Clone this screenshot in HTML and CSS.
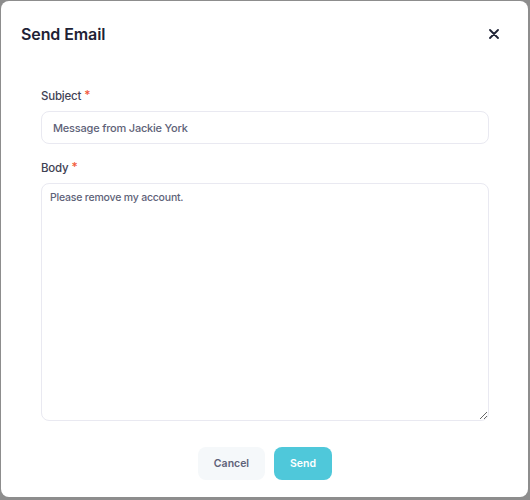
FILE: index.html
```html
<!DOCTYPE html>
<html lang="en">
<head>
    <meta charset="UTF-8">
    <meta name="viewport" content="width=device-width, initial-scale=1.0">
    <title>Send Email</title>
    <link rel="stylesheet" href="styles.css">
</head>
<body>
    <div class="modal">
        <div class="modal-header">
            <h2>Send Email</h2>
            <button class="close-btn" aria-label="Close">
                <svg width="10" height="10" viewBox="0 0 10 10">
                    <path d="M1 1 L9 9 M9 1 L1 9" stroke="#1e2235" stroke-width="1.8" stroke-linecap="round"/>
                </svg>
            </button>
        </div>

        <form class="modal-body">
            <label for="subject">Subject <span class="req">*</span></label>
            <input type="text" id="subject" value="Message from Jackie York">

            <label for="body" class="second">Body <span class="req">*</span></label>
            <textarea id="body">Please remove my account.</textarea>

            <div class="actions">
                <button type="button" class="btn cancel">Cancel</button>
                <button type="button" class="btn send">Send</button>
            </div>
        </form>
    </div>
</body>
</html>
```

FILE: styles.css
```css
* {
    box-sizing: border-box;
}
body {
    margin: 0;
    height: 500px;
    padding: 1px 2px 3px 1px;
    background-color: #8d8d8d;
    font-family: Inter, "Noto Sans", sans-serif;
}
.modal {
    height: 496px;
    background-color: #fff;
    border-radius: 8px;
}
.modal-header {
    display: flex;
    justify-content: space-between;
    align-items: center;
    padding: 21px 28px 0 20px;
}
.modal-header h2 {
    margin: 0;
    font-size: 16px;
    line-height: 24px;
    font-weight: 600;
    color: #1e2235;
    letter-spacing: -0.1px;
}
.close-btn {
    border: none;
    background: none;
    padding: 0;
    width: 12px;
    height: 12px;
    display: flex;
    align-items: center;
    justify-content: center;
    cursor: pointer;
}
.modal-body {
    display: flex;
    flex-direction: column;
    padding: 40px 39px 0 40px;
}
label {
    height: 20px;
    font-size: 11.5px;
    line-height: 20px;
    font-weight: 500;
    color: #3f4254;
    letter-spacing: -0.2px;
    margin-bottom: 5px;
}
label.second {
    margin-top: 14px;
}
.req {
    color: #f25a3a;
    font-size: 12px;
    line-height: 0;
    vertical-align: 1px;
}
input, textarea {
    font-family: inherit;
    border: 1px solid #e9e9f1;
    border-radius: 8px;
    color: #5e6278;
    outline: none;
}
input {
    height: 33px;
    padding: 0 11px;
    font-size: 11px;
    font-weight: 500;
    letter-spacing: -0.2px;
}
textarea {
    height: 238px;
    padding: 7px 8px;
    font-size: 10.5px;
    font-weight: 500;
    letter-spacing: -0.2px;
    resize: vertical;
}
.actions {
    display: flex;
    justify-content: center;
    gap: 9px;
    margin-top: 26px;
}
.btn {
    height: 33px;
    border: none;
    border-radius: 8px;
    font-family: inherit;
    font-size: 10.5px;
    font-weight: 600;
    cursor: pointer;
}
.cancel {
    width: 67px;
    background-color: #f5f8fa;
    color: #5e6278;
}
.send {
    width: 58px;
    background-color: #4fc8da;
    color: #fff;
}
```
